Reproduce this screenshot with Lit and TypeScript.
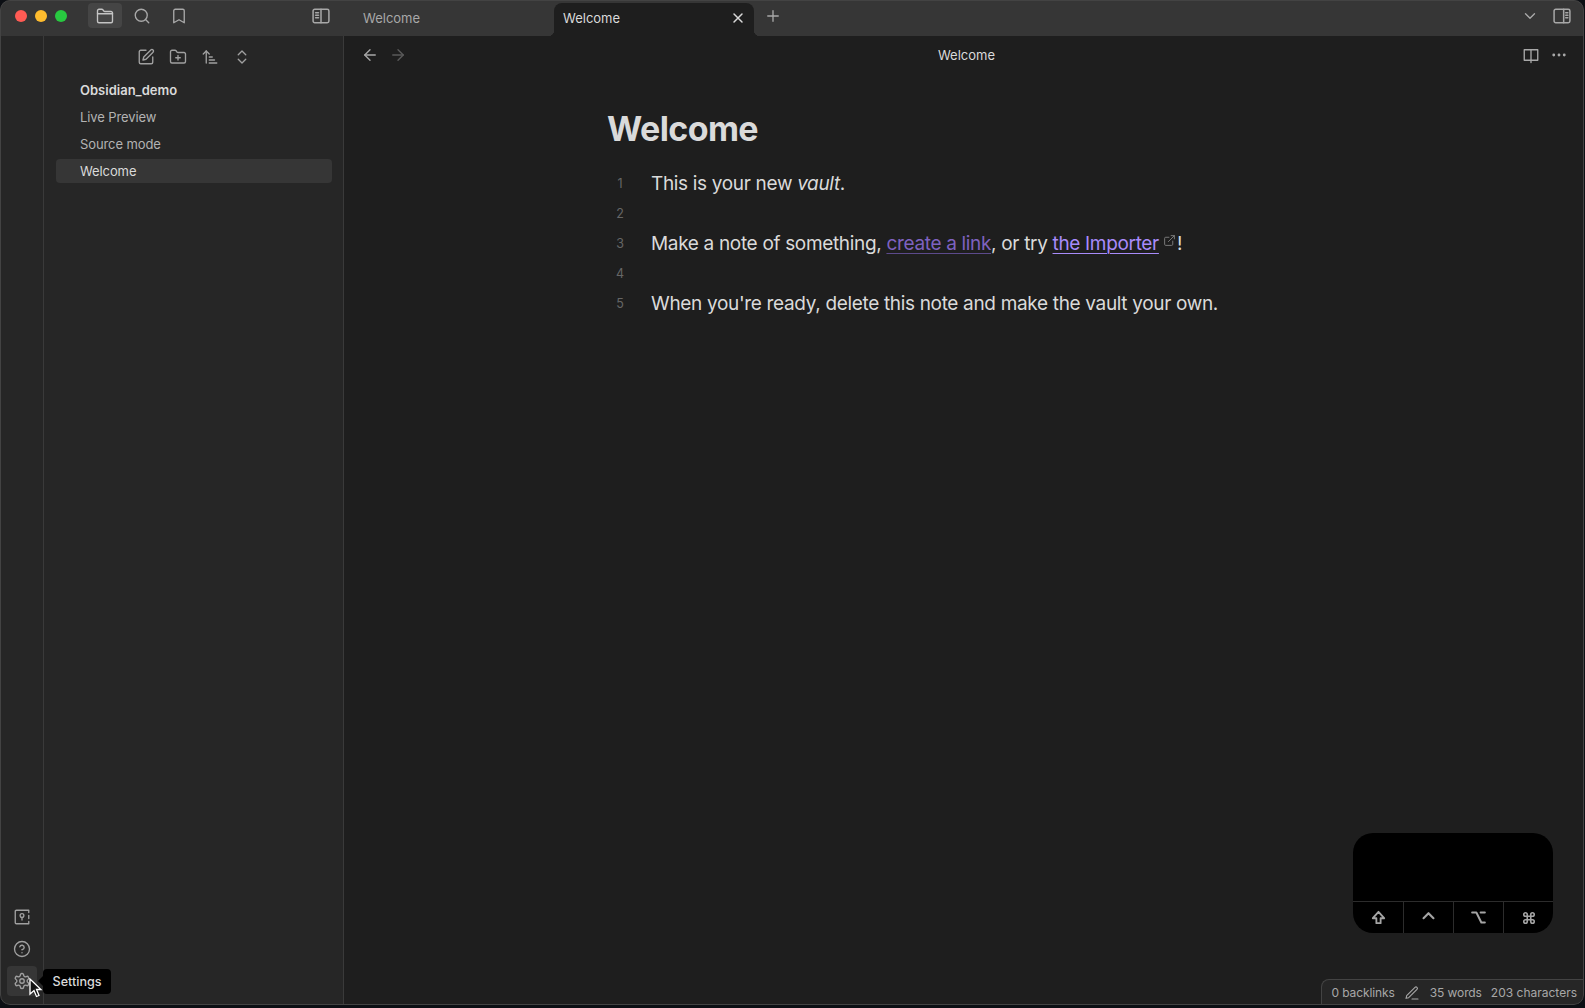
import { LitElement, html, css, svg } from "lit";
import { customElement } from "lit/decorators.js";

const icon = (body: unknown, size = 18, sw = 1.8) =>
  html`<svg class="ico" width=${size} height=${size} viewBox="0 0 24 24" fill="none" stroke="currentColor" stroke-width=${sw} stroke-linecap="round" stroke-linejoin="round">${body}</svg>`;

const icons = {
  folder: svg`<path d="M2 9h20"/><path d="M4 21h16a2 2 0 0 0 2-2V8a2 2 0 0 0-2-2h-8.100a2 2 0 0 1-1.690-.9L9.600 4.200A2 2 0 0 0 7.930 3H4a2 2 0 0 0-2 2v14a2 2 0 0 0 2 2z"/>`,
  search: svg`<circle cx="11" cy="11" r="8"/><path d="m21 21-4.300-4.300"/>`,
  bookmark: svg`<path d="m19 21-7-4-7 4V5a2 2 0 0 1 2-2h10a2 2 0 0 1 2 2v16z"/>`,
  sidebarLeft: svg`<rect x="2.500" y="4" width="19" height="16" rx="2"/><path d="M12 4v16"/><path d="M5.500 8h3.500M5.500 11h3.500M5.500 14h3.500"/>`,
  sidebarRight: svg`<rect x="2.500" y="4" width="19" height="16" rx="2"/><path d="M14 4v16"/><path d="M16.500 8h2.500M16.500 11h2.500M16.500 14h2.500"/>`,
  edit: svg`<path d="M12 3H5a2 2 0 0 0-2 2v14a2 2 0 0 0 2 2h14a2 2 0 0 0 2-2v-7"/><path d="M18.400 2.600a2.100 2.100 0 1 1 3 3L12 15l-4 1 1-4z"/>`,
  folderPlus: svg`<path d="M12 10v6M9 13h6"/><path d="M20 20a2 2 0 0 0 2-2V8a2 2 0 0 0-2-2h-7.900a2 2 0 0 1-1.690-.9L9.600 3.900A2 2 0 0 0 7.930 3H4a2 2 0 0 0-2 2v13a2 2 0 0 0 2 2z"/>`,
  sort: svg`<path d="m3 8 4-4 4 4"/><path d="M7 4v16"/><path d="M11 12h4M11 16h7M11 20h10"/>`,
  chevrons: svg`<path d="m7 9 5-5 5 5"/><path d="m7 15 5 5 5-5"/>`,
  vault: svg`<path d="M21 6V3H4.500A1.500 1.500 0 0 0 3 4.500v15A1.500 1.500 0 0 0 4.500 21H21v-3"/><path d="M21 10v4"/><circle cx="12" cy="10" r="2.500"/><path d="M12 12.500V16"/>`,
  help: svg`<circle cx="12" cy="12" r="10"/><path d="M9.090 9a3 3 0 0 1 5.830 1c0 2-3 3-3 3"/><path d="M12 17h.01"/>`,
  gear: svg`<path d="M12.220 2h-.44a2 2 0 0 0-2 2v.18a2 2 0 0 1-1 1.730l-.43.25a2 2 0 0 1-2 0l-.15-.08a2 2 0 0 0-2.730.73l-.22.380a2 2 0 0 0 .73 2.730l.15.100a2 2 0 0 1 1 1.720v.510a2 2 0 0 1-1 1.740l-.15.090a2 2 0 0 0-.73 2.730l.22.380a2 2 0 0 0 2.730.730l.15-.080a2 2 0 0 1 2 0l.43.250a2 2 0 0 1 1 1.730V20a2 2 0 0 0 2 2h.44a2 2 0 0 0 2-2v-.18a2 2 0 0 1 1-1.730l.43-.25a2 2 0 0 1 2 0l.15.080a2 2 0 0 0 2.730-.730l.22-.390a2 2 0 0 0-.73-2.730l-.15-.080a2 2 0 0 1-1-1.740v-.500a2 2 0 0 1 1-1.740l.15-.090a2 2 0 0 0 .73-2.730l-.22-.380a2 2 0 0 0-2.730-.730l-.15.080a2 2 0 0 1-2 0l-.43-.250a2 2 0 0 1-1-1.730V4a2 2 0 0 0-2-2z"/><circle cx="12" cy="12" r="3"/>`,
  left: svg`<path d="m12 19-7-7 7-7"/><path d="M19 12H5"/>`,
  right: svg`<path d="M5 12h14"/><path d="m12 5 7 7-7 7"/>`,
  x: svg`<path d="M18 6 6 18M6 6l12 12"/>`,
  plus: svg`<path d="M5 12h14M12 5v14"/>`,
  down: svg`<path d="m6 9 6 6 6-6"/>`,
  book: svg`<path d="M12 5H3v14h9M12 5h9v14h-9M12 5v17"/>`,
  dots: svg`<circle cx="5" cy="12" r="1"/><circle cx="12" cy="12" r="1"/><circle cx="19" cy="12" r="1"/>`,
  pencil: svg`<path d="M12 21h9"/><path d="M16.500 3.500a2.120 2.120 0 0 1 3 3L7 19l-4 1 1-4z"/>`,
  external: svg`<path d="M15 3h6v6"/><path d="M10 14 21 3"/><path d="M18 13v6a2 2 0 0 1-2 2H5a2 2 0 0 1-2-2V8a2 2 0 0 1 2-2h6"/>`,
  shift: svg`<path d="M9 20v-7H4l8-9 8 9h-5v7z"/>`,
  ctrl: svg`<path d="m5 13 7-7 7 7"/>`,
  option: svg`<path d="M3 5h6l7 14h5M15 5h6"/>`,
  cmd: svg`<path d="M15 6v12a3 3 0 1 0 3-3H6a3 3 0 1 0 3 3V6a3 3 0 1 0-3 3h12a3 3 0 1 0-3-3"/>`,
};

@customElement("app-root")
export class AppRoot extends LitElement {
  static styles = css`
    :host {
      display: block;
      height: 1008px;
      background: #0c0f14;
      font-family: Inter, "Liberation Sans", sans-serif;
      overflow: hidden;
    }

    .ico {
      display: block;
      flex: none;
    }

    .window {
      position: relative;
      box-sizing: border-box;
      width: 1584px;
      height: 1005px;
      display: grid;
      grid-template-rows: 36px 1fr;
      background: #1e1e1e;
      border-radius: 10px;
      overflow: hidden;
    }

    /* hairline round the whole window */
    .window::after {
      content: "";
      position: absolute;
      inset: 0;
      border: 1px solid #434343;
      border-radius: 10px;
      pointer-events: none;
    }

    /* title bar */
    .titlebar {
      display: grid;
      grid-template-columns: 344px 1fr;
      background: #363636;
    }

    .lefttop {
      display: flex;
      align-items: flex-start;
      padding: 3px 0 0 15px;
    }

    .lights {
      display: flex;
      gap: 8px;
      padding-top: 7px;
      width: 73px;
    }

    .lights i {
      width: 12px;
      height: 12px;
      border-radius: 50%;
    }

    .navbtn {
      width: 34px;
      height: 25px;
      margin-right: 3px;
      display: flex;
      align-items: center;
      justify-content: center;
      color: #a8a8a8;
      border-radius: 4px;
    }

    .navbtn.on {
      background: #454545;
      color: #c4c4c4;
    }

    .navbtn.toggle {
      margin-left: auto;
      margin-right: 6px;
    }

    .tabs {
      display: flex;
      align-items: flex-end;
      color: #a8a8a8;
      font-size: 13px;
    }

    .tab {
      box-sizing: border-box;
      width: 210px;
      height: 33px;
      display: flex;
      align-items: center;
      padding: 0 0 3px 19px;
    }

    .tab.active {
      position: relative;
      width: 200px;
      padding-left: 9px;
      padding-right: 8px;
      justify-content: space-between;
      background: #1e1e1e;
      color: #dadada;
      border-radius: 8px 8px 0 0;
    }

    .tab.active::before,
    .tab.active::after {
      content: "";
      position: absolute;
      bottom: 0;
      width: 6px;
      height: 6px;
      background: radial-gradient(circle at 0 0, #363636 6px, #1e1e1e 6.5px);
    }

    .tab.active::before {
      left: -6px;
    }

    .tab.active::after {
      right: -6px;
      background: radial-gradient(circle at 100% 0, #363636 6px, #1e1e1e 6.5px);
    }

    .newtab {
      margin: 0 0 4px 10px;
      align-self: center;
      color: #a8a8a8;
    }

    .tabend {
      margin-left: auto;
      align-self: flex-start;
      display: flex;
      align-items: center;
      gap: 13px;
      padding: 6px 12px 0 0;
      color: #a8a8a8;
    }

    /* panes */
    .panes {
      display: grid;
      grid-template-columns: 44px 300px 1fr;
      min-height: 0;
    }

    .ribbon {
      box-sizing: border-box;
      background: #262626;
      border-right: 1px solid #3a3a3a;
      display: flex;
      flex-direction: column;
      justify-content: flex-end;
      align-items: center;
      gap: 2px;
      padding-bottom: 9px;
      color: #a0a0a0;
    }

    .ribbon-btn {
      width: 30px;
      height: 30px;
      display: flex;
      align-items: center;
      justify-content: center;
      border-radius: 4px;
    }

    .ribbon-btn.on {
      background: #363636;
    }

    .sidebar {
      box-sizing: border-box;
      background: #262626;
      border-right: 1px solid #3a3a3a;
      padding: 0 11px 0 12px;
    }

    .actions {
      height: 42px;
      display: flex;
      align-items: center;
      justify-content: center;
      gap: 14px;
      color: #a0a0a0;
    }

    .item {
      height: 24px;
      margin-bottom: 3px;
      padding-left: 24px;
      display: flex;
      align-items: center;
      border-radius: 4px;
      color: #b3b3b3;
      font-size: 13px;
      letter-spacing: -0.1px;
    }

    .item.root {
      color: #dadada;
      font-weight: 600;
      letter-spacing: 0;
    }

    .item.active {
      background: #363636;
      color: #dadada;
    }

    /* main */
    .main {
      min-width: 0;
    }

    .viewhead {
      display: grid;
      grid-template-columns: 1fr auto 1fr;
      align-items: center;
      height: 37px;
      padding: 0 16px 0 17px;
      color: #a8a8a8;
      font-size: 13px;
    }

    .navs,
    .viewacts {
      display: flex;
      align-items: center;
      gap: 10px;
    }

    .viewacts {
      justify-content: flex-end;
    }

    .dim {
      color: #5a5a5a;
    }

    .viewtitle {
      color: #dadada;
      padding: 1px 0 0 4px;
    }

    .doc {
      padding: 34px 0 0 263px;
      color: #dadada;
      font-size: 19px;
      letter-spacing: -0.33px;
    }

    h1 {
      margin: 0 0 18px;
      font-size: 34px;
      line-height: 44px;
      font-weight: 700;
      letter-spacing: -0.6px;
    }

    .line {
      display: flex;
      height: 30px;
      line-height: 30px;
      margin-left: -14px;
    }

    .num {
      width: 58px;
      padding-right: 4px;
      box-sizing: border-box;
      text-align: center;
      color: #666;
      font-size: 12.500px;
      letter-spacing: 0;
    }

    .intlink {
      color: #7e62c0;
      text-decoration: underline;
      text-decoration-thickness: 1px;
      text-underline-offset: 3px;
      text-decoration-color: #5c4a8c;
    }

    .extlink {
      color: #a88bfa;
      text-decoration: underline;
      text-decoration-thickness: 1px;
      text-underline-offset: 3px;
    }

    .ext {
      display: inline-block;
      margin: 0 1px 0 4px;
      color: #7a7a7a;
      vertical-align: 3px;
    }

    /* overlays */
    .keys {
      position: absolute;
      left: 1353px;
      top: 833px;
      width: 200px;
      height: 100px;
      background: #000;
      border-radius: 20px;
      display: flex;
      flex-direction: column;
      justify-content: flex-end;
      overflow: hidden;
      color: #a4a4a4;
    }

    .keyrow {
      height: 31px;
      display: grid;
      grid-template-columns: repeat(4, 1fr);
      border-top: 1px solid #2c2c2c;
    }

    .keyrow span {
      display: flex;
      align-items: center;
      justify-content: center;
      border-left: 1px solid #2c2c2c;
    }

    .keyrow span:first-child {
      border-left: 0;
    }

    .status {
      position: absolute;
      right: 0;
      bottom: 0;
      height: 26px;
      box-sizing: border-box;
      display: flex;
      align-items: center;
      gap: 9px;
      padding: 0 7px 0 9px;
      background: #262626;
      border: 1px solid #434343;
      border-width: 1px 0 0 1px;
      border-radius: 8px 0 10px 0;
      color: #a8a8a8;
      font-size: 12px;
    }

    .status .tight {
      letter-spacing: -0.1px;
    }

    .status .pen {
      margin-right: 1px;
    }

    .tip {
      position: absolute;
      left: 43px;
      top: 969px;
      height: 25px;
      padding: 0 9.500px;
      display: flex;
      align-items: center;
      background: #000;
      color: #dadada;
      border-radius: 4px;
      font-size: 12.600px;
      font-weight: 500;
    }

    .tip::before {
      content: "";
      position: absolute;
      left: -5px;
      top: 7px;
      border: 5px solid transparent;
      border-left: 0;
      border-right-color: #000;
    }

    .cursor {
      position: absolute;
      left: 29px;
      top: 978px;
    }
  `;

  render() {
    return html`
      <div class="window">
        <div class="titlebar">
          <div class="lefttop">
            <div class="lights">
              <i style="background:#ff5b54"></i>
              <i style="background:#febc2e"></i>
              <i style="background:#28c840"></i>
            </div>
            <div class="navbtn on">${icon(icons.folder)}</div>
            <div class="navbtn">${icon(icons.search)}</div>
            <div class="navbtn">${icon(icons.bookmark)}</div>
            <div class="navbtn toggle">${icon(icons.sidebarLeft, 20)}</div>
          </div>
          <div class="tabs">
            <div class="tab">Welcome</div>
            <div class="tab active">
              <span>Welcome</span>
              ${icon(icons.x, 16, 2.2)}
            </div>
            <div class="newtab">${icon(icons.plus, 18)}</div>
            <div class="tabend">
              ${icon(icons.down, 18)} ${icon(icons.sidebarRight, 20)}
            </div>
          </div>
        </div>
        <div class="panes">
          <div class="ribbon">
            <div class="ribbon-btn">${icon(icons.vault)}</div>
            <div class="ribbon-btn">${icon(icons.help)}</div>
            <div class="ribbon-btn on">${icon(icons.gear)}</div>
          </div>
          <div class="sidebar">
            <div class="actions">
              ${icon(icons.edit)} ${icon(icons.folderPlus)}
              ${icon(icons.sort)} ${icon(icons.chevrons)}
            </div>
            <div class="item root">Obsidian_demo</div>
            <div class="item">Live Preview</div>
            <div class="item">Source mode</div>
            <div class="item active">Welcome</div>
          </div>
          <div class="main">
            <div class="viewhead">
              <div class="navs">
                ${icon(icons.left, 18)}
                <span class="dim">${icon(icons.right, 18)}</span>
              </div>
              <div class="viewtitle">Welcome</div>
              <div class="viewacts">
                ${icon(icons.book, 18)} ${icon(icons.dots, 18)}
              </div>
            </div>
            <div class="doc">
              <h1>Welcome</h1>
              <div class="line">
                <span class="num">1</span>
                <span>This is your new <em>vault</em>.</span>
              </div>
              <div class="line"><span class="num">2</span></div>
              <div class="line">
                <span class="num">3</span>
                <span>Make a note of something, <span class="intlink">create a link</span>, or try
                  <span class="extlink">the Importer</span><span class="ext">${icon(icons.external, 13)}</span>!</span>
              </div>
              <div class="line"><span class="num">4</span></div>
              <div class="line">
                <span class="num">5</span>
                <span>When you're ready, delete this note and make the vault your own.</span>
              </div>
            </div>
          </div>
        </div>
        <div class="keys">
          <div class="keyrow">
            <span>${icon(icons.shift, 17, 2.6)}</span>
            <span>${icon(icons.ctrl, 17, 3)}</span>
            <span>${icon(icons.option, 17, 2.8)}</span>
            <span>${icon(icons.cmd, 14, 2.8)}</span>
          </div>
        </div>
        <div class="status">
          <span class="tight">0 backlinks</span>
          <span class="pen">${icon(icons.pencil, 16, 1.6)}</span>
          <span class="tight">35 words</span>
          <span>203 characters</span>
        </div>
        <div class="tip">Settings</div>
        <svg class="cursor" width="14" height="20" viewBox="0 0 14 20">
          <path d="M1 1v15l4-3.500 2.500 6 2.500-1-2.500-6H12z" fill="#111" stroke="#fff" stroke-width="1.300"/>
        </svg>
      </div>
    `;
  }
}
